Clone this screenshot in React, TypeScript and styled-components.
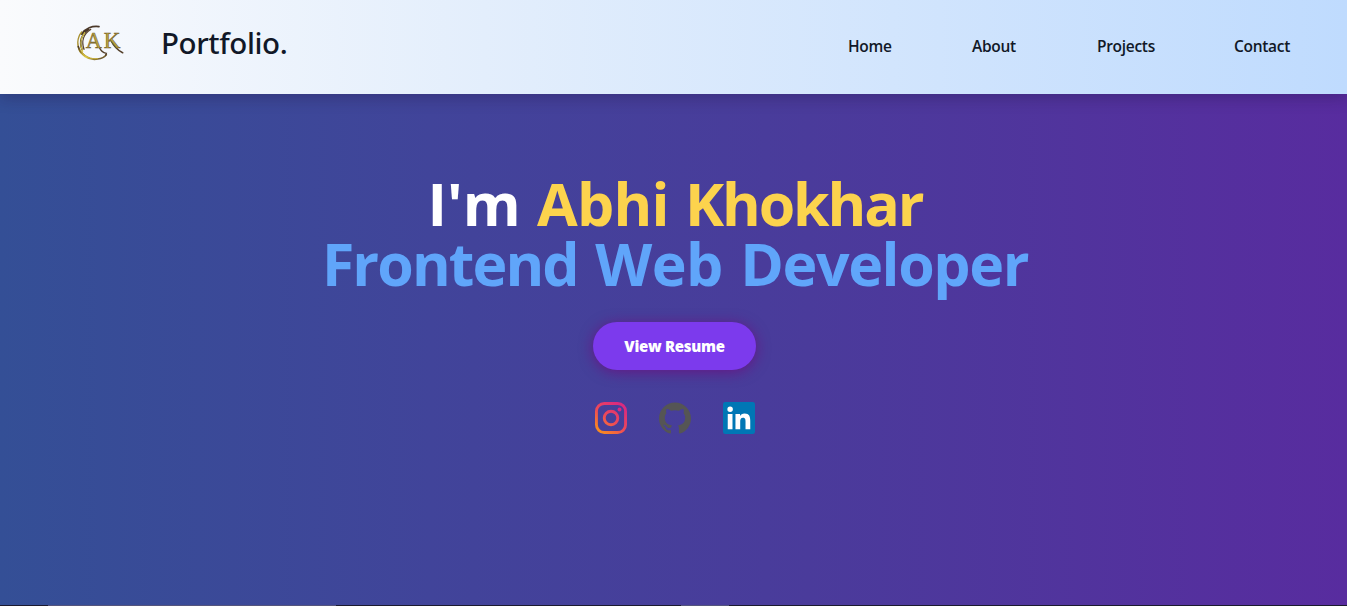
import React from "react";
import styled, { createGlobalStyle } from "styled-components";

const GlobalStyle = createGlobalStyle`
  *, *::before, *::after { box-sizing: border-box; }
  html, body { margin: 0; height: 100%; overflow: hidden; }
  body { font-family: "Open Sans", "Noto Sans", sans-serif; }
  h1, h2 { margin: 0; }
`;

const Page = styled.div`
  height: 100vh;
  display: flex;
  flex-direction: column;
`;

const Header = styled.header`
  position: relative;
  z-index: 1;
  flex: 0 0 94px;
  display: flex;
  justify-content: space-between;
  padding: 0 55px 0 76px;
  background: linear-gradient(to right, #fafbfd, #e3eefc 36%, #bfdbfe);
  box-shadow: 0 4px 14px rgba(30, 15, 60, 0.3);
  color: #111827;
`;

const Brand = styled.div`
  display: flex;
  align-items: flex-start;
`;

const LogoArt = styled.svg`
  width: 48px;
  height: 38px;
  margin-top: 24px;
`;

const BrandName = styled.span`
  margin: 23px 0 0 37px;
  font-family: "Noto Sans", "Open Sans", sans-serif;
  font-size: 29.5px;
  line-height: 40px;
  font-weight: 500;
  letter-spacing: -0.4px;
`;

const Nav = styled.nav`
  display: flex;
  gap: 80px;
  padding-top: 34px;
`;

const NavLink = styled.a<{ $width: number }>`
  width: ${({ $width }) => $width}px;
  white-space: nowrap;
  font-size: 15.5px;
  line-height: 24px;
  font-weight: 600;
  letter-spacing: -0.3px;
`;

const Hero = styled.main`
  flex: 1;
  display: flex;
  flex-direction: column;
  align-items: center;
  padding: 79px 0 0 3px;
  background: linear-gradient(to right, #344f96, #41449a 32%, #4a3b9b 60%, #582c9f);
`;

const Title = styled.h1`
  font-size: 59px;
  line-height: 60px;
  font-weight: 700;
  color: #fff;
  text-align: center;
  white-space: nowrap;
  word-spacing: 1px;
`;

const Name = styled.span`
  color: #fcd34d;
`;

const Role = styled.span`
  display: block;
  color: #60a5fa;
  word-spacing: 2.2px;
`;

const Word = styled.span<{ $tracking: number }>`
  letter-spacing: ${({ $tracking }) => $tracking}px;
`;

const ResumeButton = styled.button`
  margin: 29px 1px 0 0;
  width: 163px;
  height: 48px;
  padding: 0;
  border: 0;
  border-radius: 24px;
  background: #7c3aed;
  box-shadow: 0 2px 14px rgba(112, 10, 125, 0.75);
  color: #fff;
  font: 800 15px/24px "Open Sans", "Noto Sans", sans-serif;
  letter-spacing: -0.3px;
`;

const Socials = styled.div`
  display: flex;
  gap: 32px;
  margin-top: 32px;
`;

const SocialIcon = styled.svg`
  display: block;
  width: 32px;
  height: 32px;
`;

const BottomEdge = styled.div`
  flex: 0 0 1px;
  display: flex;
  background: #1b1a2e;
`;

const EdgeSegment = styled.span<{ $offset: number; $width: number }>`
  margin-left: ${({ $offset }) => $offset}px;
  width: ${({ $width }) => $width}px;
  background: #55557c;
`;

function Logo() {
  return (
    <LogoArt viewBox="48 42 144 114" aria-label="AK">
      <defs>
        <linearGradient id="gold" x1="0" y1="0" x2="1" y2="1">
          <stop offset="0" stopColor="#4a3524" />
          <stop offset="0.35" stopColor="#b39a25" />
          <stop offset="0.55" stopColor="#e0cf45" />
          <stop offset="1" stopColor="#463028" />
        </linearGradient>
      </defs>
      <g fill="none" strokeLinecap="round">
        <path d="M117 50C97 47 76 55 65 72M86 58C64 72 57 96 66 118" stroke="#4a3829" strokeWidth="5" />
        <path d="M65 66C50 84 50 110 62 128" stroke="#a8902f" strokeWidth="4" />
        <path d="M92 58C70 72 64 95 72 118" stroke="#5b432c" strokeWidth="4" />
        <path d="M74 68C60 86 60 108 68 124" stroke="#d8c542" strokeWidth="3.5" />
        <path d="M55 110c6 24 29 42 58 37 14-2 22-8 26-13" stroke="url(#gold)" strokeWidth="5" />
        <path d="M62 120c12 20 30 28 50 26" stroke="#c4ab34" strokeWidth="3" />
        <path d="M118 112q6 16 21 18l-2 6" stroke="#54402b" strokeWidth="4" />
        <path d="M152 90q14 28 36 38" stroke="#54402b" strokeWidth="5" />
      </g>
      <g fill="#bba63a" stroke="#75602f" strokeWidth="1.8" fontFamily="Liberation Serif, serif">
        <text x="77" y="115" fontSize="72" textLength="48" lengthAdjust="spacingAndGlyphs">A</text>
        <text x="131" y="114" fontSize="70" textLength="50" lengthAdjust="spacingAndGlyphs">K</text>
      </g>
    </LogoArt>
  );
}

function Instagram() {
  return (
    <SocialIcon viewBox="0 0 24 24" aria-label="Instagram">
      <defs>
        <linearGradient id="insta" gradientUnits="userSpaceOnUse" x1="2" y1="23" x2="18" y2="2">
          <stop offset="0" stopColor="#fa9418" />
          <stop offset="0.5" stopColor="#ee4b55" />
          <stop offset="1" stopColor="#db2b7e" />
        </linearGradient>
      </defs>
      <g fill="none" stroke="url(#insta)" strokeWidth="2.16">
        <rect x="1.08" y="1.08" width="21.84" height="21.84" rx="5.9" />
        <circle cx="12" cy="12" r="5.08" />
      </g>
      <circle cx="18.4" cy="5.6" r="1.44" fill="#db2b7e" />
    </SocialIcon>
  );
}

function GitHub() {
  return (
    <SocialIcon viewBox="0 0 24 24" aria-label="GitHub">
      <path
        fill="#555555"
        d="M12 .297c-6.63 0-12 5.373-12 12 0 5.303 3.438 9.8 8.205 11.385.6.113.82-.258.82-.577 0-.285-.01-1.04-.015-2.04-3.338.724-4.042-1.61-4.042-1.61C4.422 18.07 3.633 17.7 3.633 17.7c-1.087-.744.084-.729.084-.729 1.205.084 1.838 1.236 1.838 1.236 1.07 1.835 2.809 1.305 3.495.998.108-.776.417-1.305.76-1.605-2.665-.3-5.466-1.332-5.466-5.93 0-1.31.465-2.38 1.235-3.22-.135-.303-.54-1.523.105-3.176 0 0 1.005-.322 3.3 1.23.96-.267 1.98-.399 3-.405 1.02.006 2.04.138 3 .405 2.28-1.552 3.285-1.23 3.285-1.23.645 1.653.24 2.873.12 3.176.765.84 1.23 1.91 1.23 3.22 0 4.61-2.805 5.625-5.475 5.92.42.36.81 1.096.81 2.22 0 1.606-.015 2.896-.015 3.286 0 .315.21.69.825.57C20.565 22.092 24 17.592 24 12.297c0-6.627-5.373-12-12-12"
      />
    </SocialIcon>
  );
}

function LinkedIn() {
  return (
    <SocialIcon viewBox="0 0 24 24" aria-label="LinkedIn">
      <rect width="24" height="24" rx="1.7" fill="#0077b5" />
      <path
        fill="#fff"
        d="M20.447 20.452h-3.554v-5.569c0-1.328-.027-3.037-1.852-3.037-1.853 0-2.136 1.445-2.136 2.939v5.667H9.351V9h3.414v1.561h.046c.477-.9 1.637-1.85 3.37-1.85 3.601 0 4.267 2.37 4.267 5.455v6.286zM5.337 7.433a2.062 2.062 0 0 1-2.063-2.065 2.064 2.064 0 1 1 2.063 2.065zm1.782 13.019H3.555V9h3.564v11.452z"
      />
    </SocialIcon>
  );
}

const links = [
  { label: "Home", width: 44 },
  { label: "About", width: 45 },
  { label: "Projects", width: 57 },
  { label: "Contact", width: 58 },
];

export default function App() {
  return (
    <Page>
      <GlobalStyle />
      <Header>
        <Brand>
          <Logo />
          <BrandName>Portfolio.</BrandName>
        </Brand>
        <Nav>
          {links.map((link) => (
            <NavLink key={link.label} $width={link.width}>
              {link.label}
            </NavLink>
          ))}
        </Nav>
      </Header>
      <Hero>
        <Title>
          <Word $tracking={0}>I'm</Word>{" "}
          <Name>
            <Word $tracking={-0.8}>Abhi</Word> <Word $tracking={-2.1}>Khokhar</Word>
          </Name>
          <Role>
            <Word $tracking={-1.9}>Frontend</Word> <Word $tracking={-0.6}>Web</Word>{" "}
            <Word $tracking={-1.4}>Developer</Word>
          </Role>
        </Title>
        <ResumeButton>View Resume</ResumeButton>
        <Socials>
          <Instagram />
          <GitHub />
          <LinkedIn />
        </Socials>
      </Hero>
      <BottomEdge>
        <EdgeSegment $offset={48} $width={288} />
        <EdgeSegment $offset={345} $width={48} />
      </BottomEdge>
    </Page>
  );
}
